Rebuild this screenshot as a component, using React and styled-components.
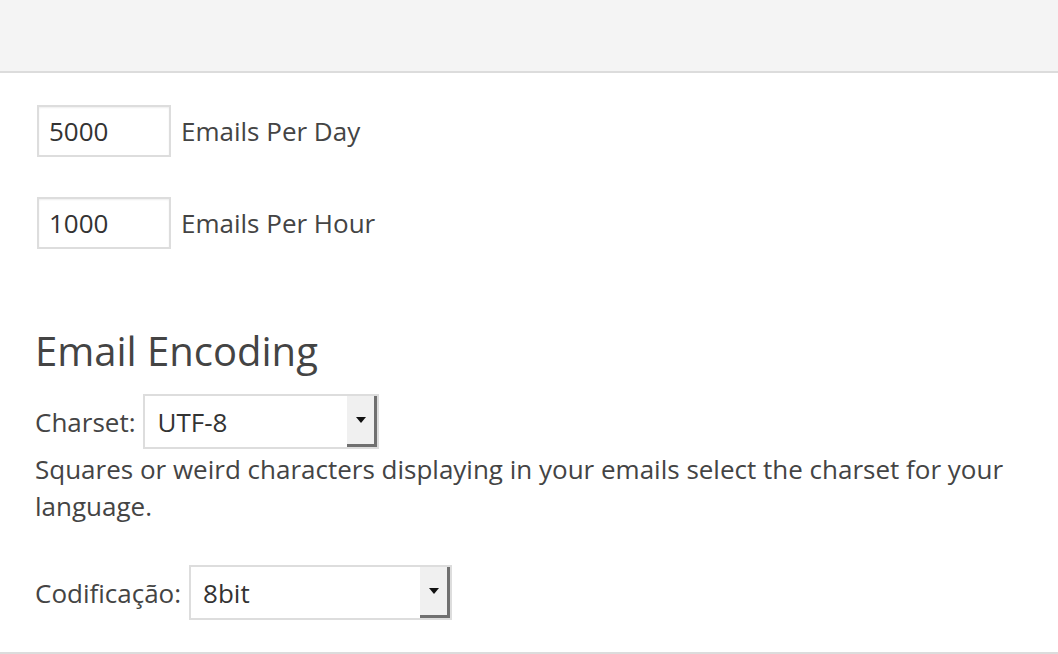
import React from 'react';
import styled, { createGlobalStyle } from 'styled-components';

const GlobalStyle = createGlobalStyle`
  html, body {
    margin: 0;
    padding: 0;
    background: #fff;
  }
  body {
    font-family: "Open Sans", "Noto Sans", sans-serif;
    color: #444;
  }
`;

const Page = styled.div`
  width: 1058px;
  height: 654px;
  overflow: hidden;
  display: flex;
  flex-direction: column;
`;

const TopBar = styled.div`
  height: 71px;
  flex-shrink: 0;
  background: #f4f4f4;
  border-bottom: 2px solid #dcdcdc;
`;

const Content = styled.div`
  flex: 1;
  padding: 32px 0 0 35px;
  border-bottom: 2px solid #dcdcdc;
`;

const LimitRow = styled.div`
  display: flex;
  align-items: center;
  gap: 10px;
  margin-bottom: 40px;
  padding-left: 2px;
  font-size: 26px;
`;

const NumberInput = styled.input`
  box-sizing: border-box;
  width: 134px;
  height: 52px;
  padding: 0 10px;
  border: 2px solid #dddddd;
  box-shadow: inset 0 1px 2px rgba(0, 0, 0, 0.07);
  font-family: inherit;
  font-size: 26px;
  color: #333;
  background: #fff;
  outline: none;
`;

const Heading = styled.h2`
  margin: 78px 0 19px;
  font-size: 40px;
  font-weight: 400;
  color: #444;
  line-height: 1.2;
`;

const FieldRow = styled.div`
  display: flex;
  align-items: center;
  gap: 8px;
  font-size: 26px;
`;

const SelectBox = styled.div`
  box-sizing: border-box;
  width: ${p => p.width}px;
  height: 55px;
  display: flex;
  border: 2px solid #dddddd;
  background: #fff;
`;

const SelectValue = styled.div`
  flex: 1;
  display: flex;
  align-items: center;
  padding-left: 12px;
  font-size: 26px;
  color: #333;
`;

const ArrowButton = styled.div`
  width: 30px;
  display: flex;
  align-items: center;
  justify-content: center;
  background: #f0f0f0;
  border-right: 3px solid #707070;
  border-bottom: 3px solid #707070;
  box-sizing: border-box;
`;

const Help = styled.p`
  max-width: 985px;
  margin: 2px 0 40px;
  font-size: 26px;
  line-height: 37px;
  color: #444;
`;

const Arrow = () => (
  <svg width="10" height="6" viewBox="0 0 10 6">
    <path d="M0 0h10L5 6z" fill="#111" />
  </svg>
);

const Select = ({ value, width }) => (
  <SelectBox width={width}>
    <SelectValue>{value}</SelectValue>
    <ArrowButton>
      <Arrow />
    </ArrowButton>
  </SelectBox>
);

export default function App() {
  return (
    <Page>
      <GlobalStyle />
      <TopBar />
      <Content>
        <LimitRow>
          <NumberInput defaultValue="5000" />
          <span>Emails Per Day</span>
        </LimitRow>
        <LimitRow>
          <NumberInput defaultValue="1000" />
          <span>Emails Per Hour</span>
        </LimitRow>
        <Heading>Email Encoding</Heading>
        <FieldRow>
          <span>Charset:</span>
          <Select value="UTF-8" width={236} />
        </FieldRow>
        <Help>
          Squares or weird characters displaying in your emails select the charset for your language.
        </Help>
        <FieldRow>
          <span>Codificação:</span>
          <Select value="8bit" width={263} />
        </FieldRow>
      </Content>
    </Page>
  );
}
